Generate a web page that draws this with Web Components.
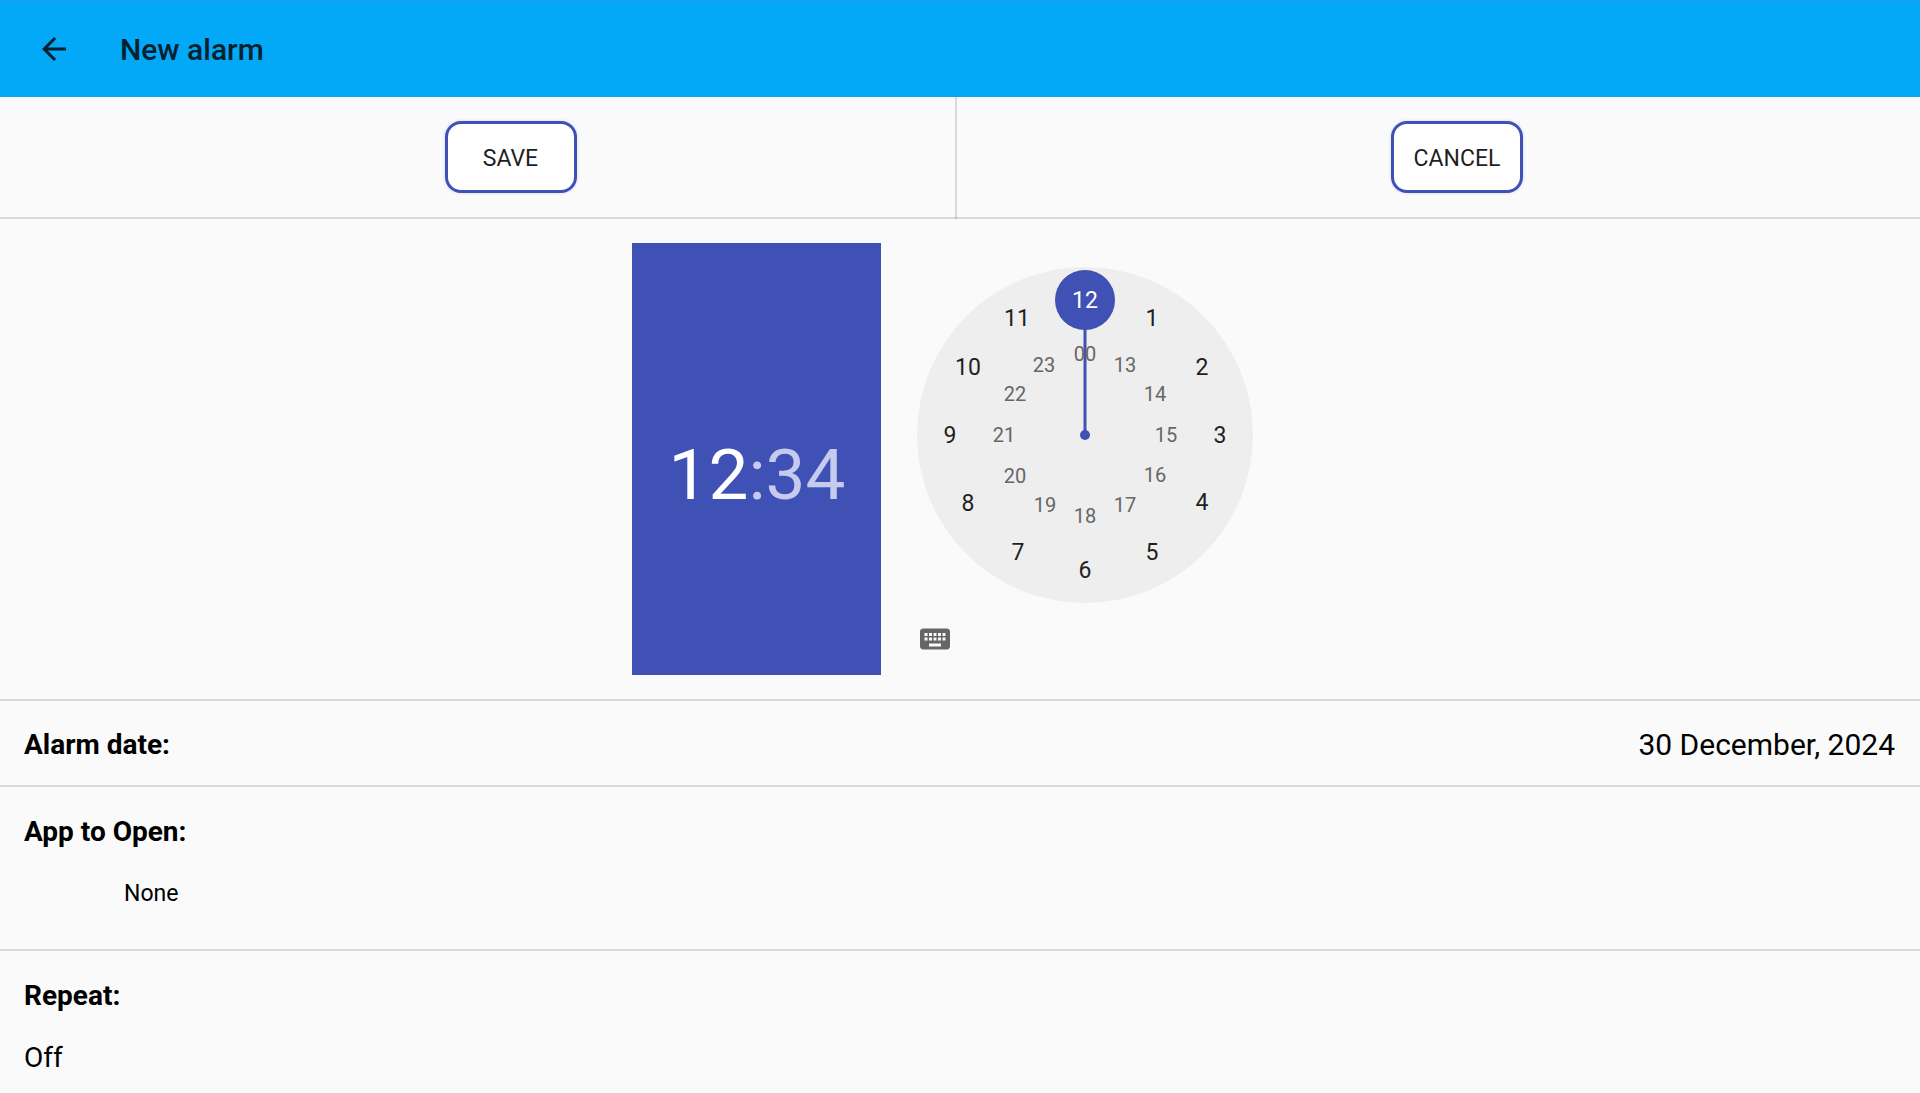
<!DOCTYPE html>
<html lang="en">
<head>
<meta charset="utf-8">
<meta name="viewport" content="width=device-width, initial-scale=1">
<title>New alarm</title>
<style>
  :root {
    --color-bar: #03a9f7;
    --color-bar-edge: #1a9bea;
    --color-accent: #3f51b5;
    --color-surface: #fafafa;
    --color-divider: rgba(0, 0, 0, 0.13);
    --color-text: #000;
    --color-text-primary: #1f1f1f;
    --color-text-secondary: #666;
  }

  body {
    margin: 0;
    min-height: 100vh;
    background: var(--color-surface);
    color: var(--color-text);
    font-family: Roboto, "Noto Sans", sans-serif;
    font-size: 28px;
  }
</style>
</head>
<body>
<alarm-editor></alarm-editor>

<script>
/**
 * Top bar with back button and page title
 */
class AppBar extends HTMLElement {
  constructor() {
    super();
    this.attachShadow({ mode: 'open' });
  }

  connectedCallback() {
    this.shadowRoot.innerHTML = `
      <style>
        :host {
          display: flex;
          align-items: center;
          gap: 48px;
          box-sizing: border-box;
          height: 97px;
          padding: 0 36px;
          border-top: 1px solid var(--color-bar-edge);
          background: var(--color-bar);
          color: #05202f;
        }

        button {
          display: flex;
          padding: 0;
          border: 0;
          background: none;
          color: inherit;
          cursor: pointer;
        }

        h1 {
          margin: 0;
          padding-top: 2px;
          font-size: 30px;
          font-weight: 500;
          line-height: 36px;
        }
      </style>

      <button type="button" aria-label="Back">
        <svg width="36" height="36" viewBox="0 0 24 24" fill="currentColor" aria-hidden="true">
          <path d="M20 11H7.83l5.59-5.59L12 4l-8 8 8 8 1.41-1.41L7.83 13H20v-2z"/>
        </svg>
      </button>
      <h1><slot></slot></h1>
    `;
  }
}

/**
 * Outlined action button
 */
class OutlineButton extends HTMLElement {
  constructor() {
    super();
    this.attachShadow({ mode: 'open' });
  }

  connectedCallback() {
    this.shadowRoot.innerHTML = `
      <style>
        :host {
          display: block;
        }

        button {
          min-width: 132px;
          height: 72px;
          padding: 4px 16px 0;
          border: 3px solid var(--color-accent);
          border-radius: 16px;
          background: #fff;
          box-shadow: 0 0 3px #c9cff5;
          color: var(--color-text-primary);
          font-family: inherit;
          font-size: 23px;
          line-height: 28px;
          text-transform: uppercase;
          cursor: pointer;
        }
      </style>

      <button type="button"><slot></slot></button>
    `;
  }
}

/**
 * Save / cancel row split by a vertical divider
 */
class ActionRow extends HTMLElement {
  constructor() {
    super();
    this.attachShadow({ mode: 'open' });
  }

  connectedCallback() {
    this.shadowRoot.innerHTML = `
      <style>
        :host {
          display: grid;
          grid-template-columns: 191fr 193fr;
          border-bottom: 2px solid var(--color-divider);
        }

        .cell {
          display: flex;
          justify-content: center;
          padding: 24px 0 24px 66px;
        }

        .cell + .cell {
          margin-bottom: -2px;
          padding: 24px 0 26px 37px;
          border-left: 2px solid var(--color-divider);
        }
      </style>

      <div class="cell"><slot name="confirm"></slot></div>
      <div class="cell"><slot name="dismiss"></slot></div>
    `;
  }
}

/**
 * 24 hour dial, outer ring 1-12 and inner ring 13-00
 */
class ClockDial extends HTMLElement {
  constructor() {
    super();
    this.attachShadow({ mode: 'open' });
  }

  connectedCallback() {
    this.render();
  }

  /**
   * Build the buttons of one ring
   * @param {string[]} labels - Labels, clockwise from the top
   * @param {number} radius - Ring radius in px
   * @param {string} ring - Class name of the ring
   * @returns {string} Markup
   */
  renderRing(labels, radius, ring) {
    const selected = this.getAttribute('hour');
    return labels.map((label, i) => {
      const angle = (i * Math.PI) / 6;
      const x = 168 + Math.round(Math.sin(angle) * radius);
      const y = 168 - Math.round(Math.cos(angle) * radius);
      const state = label === selected;
      return `<button type="button" class="${ring}" aria-pressed="${state}" style="left:${x}px;top:${y}px">${label}</button>`;
    }).join('');
  }

  render() {
    const outer = ['12', '1', '2', '3', '4', '5', '6', '7', '8', '9', '10', '11'];
    const inner = ['00', '13', '14', '15', '16', '17', '18', '19', '20', '21', '22', '23'];

    this.shadowRoot.innerHTML = `
      <style>
        :host {
          display: block;
          position: relative;
          width: 336px;
          height: 336px;
          border-radius: 50%;
          background: #eee;
        }

        svg {
          display: block;
        }

        button {
          position: absolute;
          box-sizing: border-box;
          width: 60px;
          height: 60px;
          margin: -30px 0 0 -30px;
          padding: 2px 0 0 1px;
          border: 0;
          border-radius: 50%;
          background: none;
          color: var(--color-text-primary);
          font-family: inherit;
          font-size: 23px;
          line-height: 28px;
          cursor: pointer;
        }

        .inner {
          width: 40px;
          height: 40px;
          margin: -20px 0 0 -20px;
          padding: 0 0 0 1px;
          color: var(--color-text-secondary);
          font-size: 20px;
        }

        button[aria-pressed="true"] {
          background: var(--color-accent);
          color: #fff;
        }
      </style>

      <svg width="336" height="336" viewBox="0 0 336 336" aria-hidden="true">
        <path d="M168 168V40" stroke="#3f51b5" stroke-width="3"/>
        <circle cx="168" cy="168" r="5" fill="#3f51b5"/>
      </svg>
      ${this.renderRing(outer, 135, 'outer')}
      ${this.renderRing(inner, 81, 'inner')}
    `;
  }
}

/**
 * Time picker: digital time on the left, dial and input toggle on the right
 */
class TimePicker extends HTMLElement {
  constructor() {
    super();
    this.attachShadow({ mode: 'open' });
  }

  connectedCallback() {
    const hour = this.getAttribute('hour');
    const minute = this.getAttribute('minute');

    this.shadowRoot.innerHTML = `
      <style>
        :host {
          display: flex;
          justify-content: center;
          padding: 24px 0;
          border-bottom: 2px solid var(--color-divider);
        }

        .time {
          display: flex;
          align-items: center;
          justify-content: center;
          box-sizing: border-box;
          width: 249px;
          padding: 32px 0 0 2px;
          background: var(--color-accent);
          color: #c5caee;
          font-size: 71px;
          line-height: 84px;
        }

        button {
          padding: 0;
          border: 0;
          background: none;
          color: inherit;
          font: inherit;
          cursor: pointer;
        }

        .active {
          color: #fff;
        }

        .picker {
          display: flex;
          flex-direction: column;
          align-items: flex-start;
          gap: 18px;
          padding: 24px 36px 18px;
        }

        .keyboard {
          display: flex;
          color: var(--color-text-secondary);
        }
      </style>

      <div class="time">
        <button type="button" class="active" aria-label="Hour ${hour}">${hour}</button>
        <span>:</span>
        <button type="button" aria-label="Minute ${minute}">${minute}</button>
      </div>
      <div class="picker">
        <clock-dial hour="${hour}"></clock-dial>
        <button type="button" class="keyboard" aria-label="Switch to text input">
          <svg width="36" height="36" viewBox="0 0 24 24" fill="currentColor" aria-hidden="true">
            <path d="M20 5H4c-1.1 0-1.99.9-1.99 2L2 17c0 1.1.9 2 2 2h16c1.1 0 2-.9 2-2V7c0-1.1-.9-2-2-2zm-9 3h2v2h-2V8zm0 3h2v2h-2v-2zM8 8h2v2H8V8zm0 3h2v2H8v-2zm-1 2H5v-2h2v2zm0-3H5V8h2v2zm9 7H8v-2h8v2zm0-4h-2v-2h2v2zm0-3h-2V8h2v2zm3 3h-2v-2h2v2zm0-3h-2V8h2v2z"/>
          </svg>
        </button>
      </div>
    `;
  }
}

/**
 * Settings row with a bold label and a value.
 * Add "inline" to put the value at the right edge.
 */
class SettingRow extends HTMLElement {
  constructor() {
    super();
    this.attachShadow({ mode: 'open' });
  }

  connectedCallback() {
    this.shadowRoot.innerHTML = `
      <style>
        :host {
          display: flex;
          flex-direction: column;
          gap: 29px;
          padding: 28px 24px 38px;
          border-bottom: 2px solid var(--color-divider);
        }

        :host([inline]) {
          flex-direction: row;
          align-items: center;
          justify-content: space-between;
          padding: 26px 25px 23px 24px;
        }

        :host([last]) {
          padding-bottom: 0;
          border-bottom: 0;
        }

        h2 {
          margin: 0;
          font-size: 28px;
          font-weight: 700;
          line-height: 33px;
        }

        .value {
          line-height: 33px;
        }

        :host([inline]) .value {
          font-size: 30px;
          line-height: 35px;
        }

        :host([indent]) .value {
          padding-left: 100px;
          font-size: 23px;
          line-height: 34px;
        }
      </style>

      <h2>${this.getAttribute('label')}</h2>
      <div class="value"><slot></slot></div>
    `;
  }
}

/**
 * Alarm editor page
 */
class AlarmEditor extends HTMLElement {
  constructor() {
    super();
    this.attachShadow({ mode: 'open' });
  }

  connectedCallback() {
    this.shadowRoot.innerHTML = `
      <style>
        :host {
          display: block;
        }
      </style>

      <app-bar>New alarm</app-bar>
      <main>
        <action-row>
          <outline-button slot="confirm">Save</outline-button>
          <outline-button slot="dismiss">Cancel</outline-button>
        </action-row>
        <time-picker hour="12" minute="34"></time-picker>
        <setting-row label="Alarm date:" inline>30 December, 2024</setting-row>
        <setting-row label="App to Open:" indent>None</setting-row>
        <setting-row label="Repeat:" last>Off</setting-row>
      </main>
    `;
  }
}

customElements.define('app-bar', AppBar);
customElements.define('outline-button', OutlineButton);
customElements.define('action-row', ActionRow);
customElements.define('clock-dial', ClockDial);
customElements.define('time-picker', TimePicker);
customElements.define('setting-row', SettingRow);
customElements.define('alarm-editor', AlarmEditor);
</script>
</body>
</html>
